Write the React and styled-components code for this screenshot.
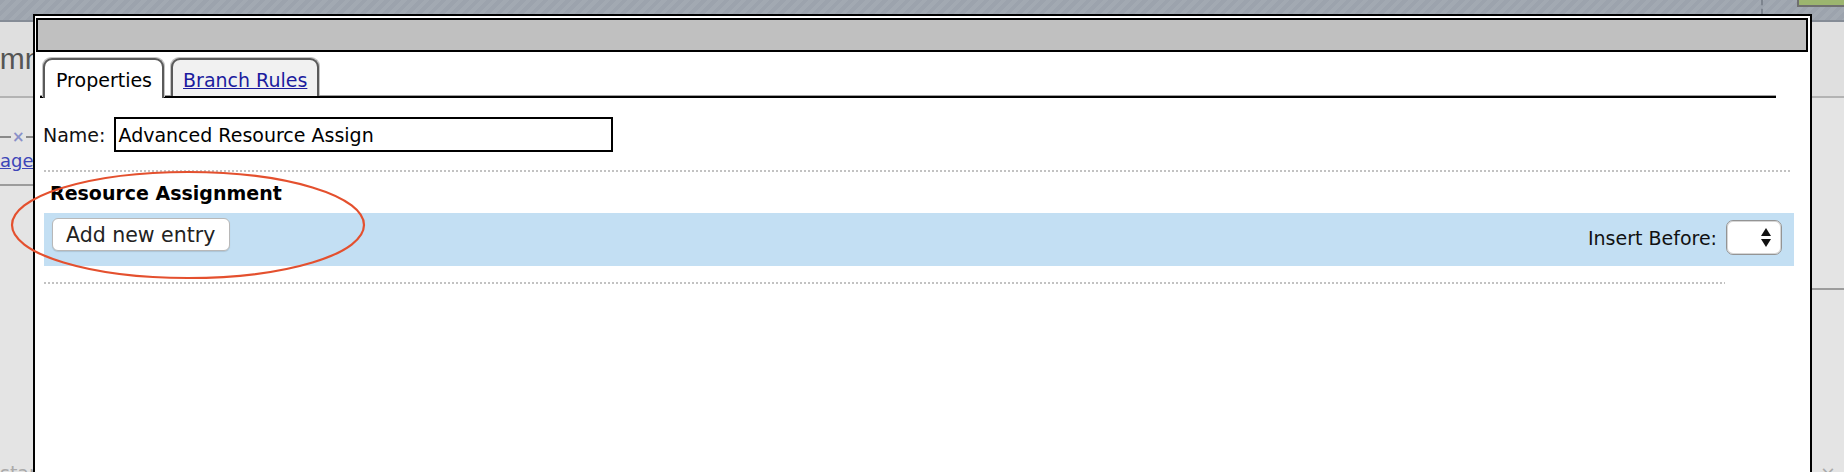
import React from "react";
import styled, { createGlobalStyle } from "styled-components";

const Global = createGlobalStyle`
  html, body { margin: 0; padding: 0; background: #e4e4e4; overflow: hidden; }
  #root { width: 1844px; height: 472px; }
  * { box-sizing: border-box; }
`;

const Page = styled.div`
  position: relative;
  width: 1844px;
  height: 472px;
  overflow: hidden;
  background: #e4e4e4;
  display: flex;
  flex-direction: column;
  font-family: "DejaVu Sans", Verdana, sans-serif;
`;

/* ---------- background page ---------- */
const TopBar = styled.div`
  flex: none;
  height: 22px;
  border-bottom: 2px solid #858c96;
  background: repeating-linear-gradient(135deg, #9ca3ad 0 4px, #a2a9b2 4px 8px);
  display: flex;
  justify-content: flex-end;
  align-items: flex-start;
`;
const DashSep = styled.div`
  width: 0;
  height: 14px;
  border-left: 2px dashed #7d848e;
  margin-right: 34px;
`;
const GreenBtn = styled.div`
  width: 47px;
  height: 7px;
  background: #9cb56f;
  border: 2px solid #6f6f6f;
  border-top: none;
  border-right: none;
`;
const HeaderBand = styled.div`
  flex: none;
  height: 76px;
  background: #dfdfdf;
  border-bottom: 2px solid #b3b3b3;
  padding-top: 22px;
`;
const HeadingClip = styled.div`
  width: 33px;
  overflow: hidden;
`;
const PageHeading = styled.h1`
  margin: 0 0 0 -37px;
  font: 400 30px/30px "Liberation Sans", Arial, sans-serif;
  color: #555;
  white-space: nowrap;
`;
const Lower = styled.div`
  flex: 1;
  display: flex;
  min-height: 0;
`;
const LeftPane = styled.div`
  width: 33px;
  overflow: hidden;
  display: flex;
  flex-direction: column;
`;
const RightPane = styled.div`
  width: 32px;
  margin-left: auto;
  display: flex;
  flex-direction: column;
`;
const SliderRow = styled.div`
  margin-top: 33px;
  height: 12px;
  display: flex;
  align-items: center;
`;
const SliderLine = styled.div`
  height: 2px;
  background: #8a8a8a;
  width: ${(p) => (p.$w ? `${p.$w}px` : "auto")};
  flex: ${(p) => (p.$w ? "none" : "1")};
`;
const SliderX = styled.span`
  font: 700 15px/12px "DejaVu Sans", sans-serif;
  color: #8a90c8;
  padding: 0 1px;
`;
const PageLink = styled.a`
  margin: 7px 0 0 -38px;
  font-size: 18px;
  line-height: 21px;
  color: #3d46b8;
  text-decoration: underline;
  white-space: nowrap;
`;
const PageDivider = styled.div`
  flex: none;
  height: 2px;
  background: #9c9c9c;
  margin-top: ${(p) => p.$top}px;
`;
const FaintText = styled.div`
  margin-top: auto;
  margin-bottom: -12px;
  padding-left: ${(p) => p.$left || 0}px;
  font-size: 19px;
  line-height: 22px;
  color: #aaa;
  white-space: nowrap;
`;

/* ---------- dialog ---------- */
const Dialog = styled.div`
  position: absolute;
  left: 33px;
  top: 14px;
  width: 1779px;
  height: 480px;
  border: 2px solid #000;
  border-bottom: none;
  background: #fff;
  padding: 2px 2px 0 1px;
  display: flex;
  flex-direction: column;
`;
const TitleBar = styled.div`
  flex: none;
  height: 34px;
  border: 2px solid #000;
  background: #c0c0c0;
`;
const Body = styled.div`
  padding: 0 14px 0 8px;
  display: flex;
  flex-direction: column;
`;
const TabStrip = styled.div`
  margin: 6px 18px 0 -4px;
  padding-left: 3px;
  display: flex;
  align-items: flex-end;
  gap: 7px;
  border-bottom: 2px solid #000;
  box-shadow: inset 0 -1px 0 #a0a0a0;
`;
const Tab = styled.div`
  height: ${(p) => (p.$active ? 40 : 38)}px;
  margin-bottom: ${(p) => (p.$active ? -2 : 0)}px;
  padding: 9px 10px 0 ${(p) => (p.$active ? 11 : 10)}px;
  border: 2px solid #5a5a5a;
  border-bottom: none;
  border-radius: 9px 9px 0 0;
  box-shadow: -1px -1px 0 #c4c4c4, 1px -1px 0 #c4c4c4;
  background: ${(p) => (p.$active ? "#fff" : "#f1f1f1")};
  font-size: 19px;
  line-height: 22px;
  color: #000;
  white-space: nowrap;
`;
const TabLink = styled.a`
  color: #1b1b9e;
  text-decoration: underline;
`;
const NameRow = styled.div`
  margin: 19px 0 0 -1px;
  display: flex;
  align-items: center;
  gap: 9px;
`;
const Label = styled.label`
  font-size: 19px;
  line-height: 22px;
  color: #111;
  white-space: nowrap;
`;
const NameInput = styled.input`
  width: 499px;
  height: 35px;
  border: 2px solid #000;
  border-radius: 0;
  padding: 0 2px;
  font: 400 19px "DejaVu Sans", Verdana, sans-serif;
  color: #000;
  background: #fff;
  outline: none;
`;
const Dotted = styled.div`
  height: 2px;
  margin-top: ${(p) => p.$top}px;
  margin-right: ${(p) => p.$inset || 0}px;
  background: repeating-linear-gradient(to right, #c2c2c2 0 2px, transparent 2px 4px);
`;
const SectionTitle = styled.div`
  margin-top: 10px;
  padding-left: 6px;
  font-size: 19px;
  font-weight: 700;
  line-height: 22px;
  color: #000;
`;
const Band = styled.div`
  margin-top: 9px;
  height: 53px;
  padding: 5px 12px 0 8px;
  background: #c3dff3;
  display: flex;
  align-items: flex-start;
`;
const AddButton = styled.button`
  height: 33px;
  padding: 0 14px 0 13px;
  font: 400 20.5px "DejaVu Sans", Verdana, sans-serif;
  color: #222;
  background: #fff;
  border: 1px solid #b8b8b8;
  border-radius: 6px;
  box-shadow: 0 1px 1px rgba(0, 0, 0, 0.12);
`;
const InsertGroup = styled.div`
  margin: 2px 0 0 auto;
  display: flex;
  align-items: center;
  gap: 9px;
`;
const SelectBox = styled.div`
  width: 56px;
  height: 35px;
  background: #fff;
  border: 1px solid #949494;
  border-radius: 7px;
  box-shadow: inset 0 0 0 1px #d6d6d6;
  display: flex;
  align-items: center;
  justify-content: flex-end;
  padding-right: 10px;
`;
const Annotation = styled.svg`
  position: absolute;
  left: 0;
  top: 0;
  pointer-events: none;
`;

export default function App() {
  return (
    <>
      <Global />
      <Page>
        <TopBar>
          <DashSep />
          <GreenBtn />
        </TopBar>
        <HeaderBand>
          <HeadingClip>
            <PageHeading>Summary</PageHeading>
          </HeadingClip>
        </HeaderBand>
        <Lower>
          <LeftPane>
            <SliderRow>
              <SliderLine $w={11} />
              <SliderX>×</SliderX>
              <SliderLine />
            </SliderRow>
            <PageLink>Manage</PageLink>
            <PageDivider $top={13} />
            <FaintText>star</FaintText>
          </LeftPane>
          <RightPane>
            <PageDivider $top={190} />
            <FaintText $left={8}>×</FaintText>
          </RightPane>
        </Lower>

        <Dialog>
          <TitleBar />
          <Body>
            <TabStrip>
              <Tab $active>Properties</Tab>
              <Tab>
                <TabLink>Branch Rules</TabLink>
              </Tab>
            </TabStrip>
            <NameRow>
              <Label>Name:</Label>
              <NameInput readOnly defaultValue="Advanced Resource Assign" />
            </NameRow>
            <Dotted $top={18} $inset={4} />
            <SectionTitle>Resource Assignment</SectionTitle>
            <Band>
              <AddButton>Add new entry</AddButton>
              <InsertGroup>
                <Label>Insert Before:</Label>
                <SelectBox>
                  <svg width="10" height="20" viewBox="0 0 10 20">
                    <polygon points="5,0 10,8 0,8" fill="#111" />
                    <polygon points="0,11 10,11 5,19" fill="#111" />
                  </svg>
                </SelectBox>
              </InsertGroup>
            </Band>
            <Dotted $top={16} $inset={69} />
          </Body>
        </Dialog>

        <Annotation width="1844" height="472" viewBox="0 0 1844 472">
          <ellipse cx="188" cy="225" rx="176" ry="53" fill="none" stroke="#e4502e" strokeWidth="2.2" />
        </Annotation>
      </Page>
    </>
  );
}
